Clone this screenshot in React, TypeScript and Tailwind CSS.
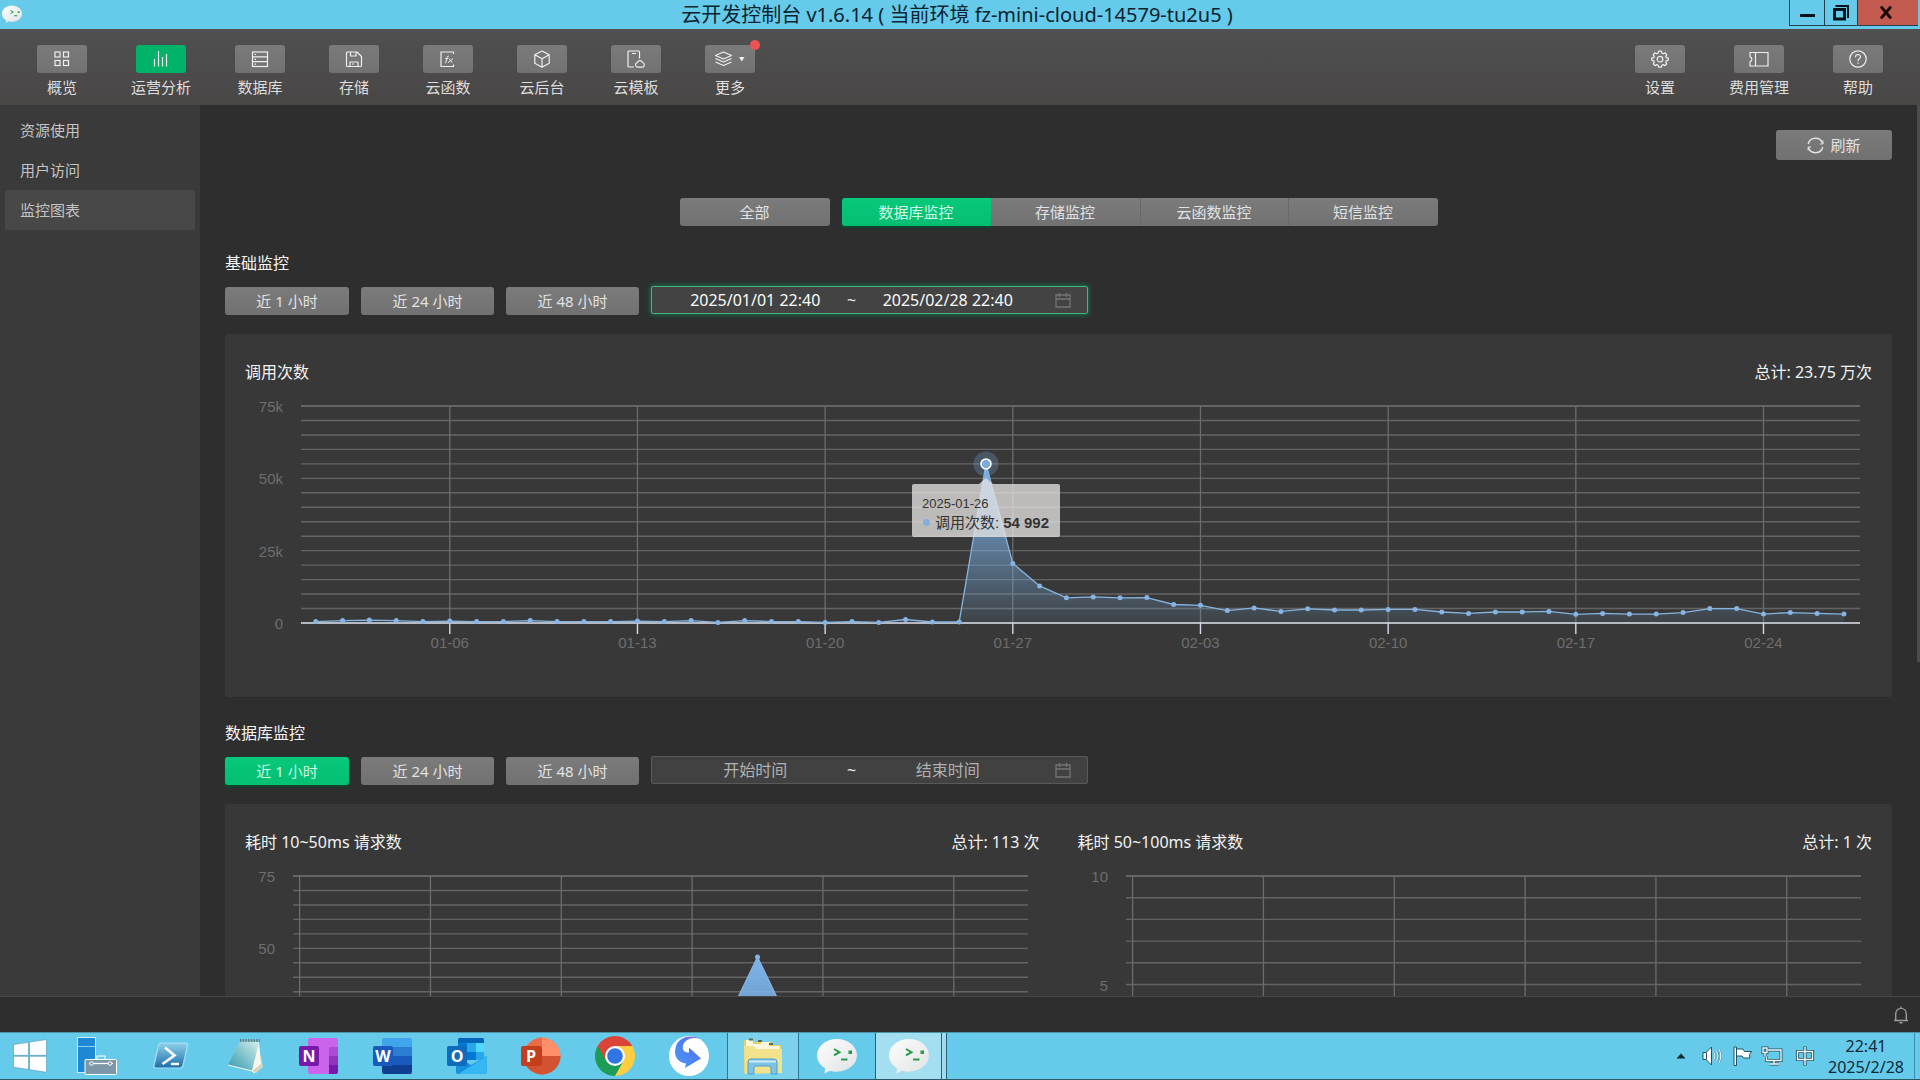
import React, { useLayoutEffect, useRef, useState } from 'react';

type IconProps = { className?: string };

const stroke = { fill: 'none', stroke: 'currentColor', strokeWidth: 1.2 } as const;

/* ---------- toolbar icons ---------- */

const OverviewIcon = () => (
  <svg width="18" height="18" viewBox="0 0 18 18" {...stroke} aria-hidden="true">
    <rect x="2" y="2" width="5" height="5" />
    <rect x="10.5" y="2" width="5" height="5" />
    <rect x="2" y="10.5" width="5" height="5" />
    <rect x="10.5" y="10.5" width="5" height="5" />
  </svg>
);

const AnalyticsIcon = () => (
  <svg width="18" height="18" viewBox="0 0 18 18" {...stroke} aria-hidden="true">
    <path d="M2.500 9v7.500M6.500 1v15.500M10.500 7v9.500M14.500 4v12.500" />
  </svg>
);

const DatabaseIcon = () => (
  <svg width="18" height="18" viewBox="0 0 18 18" {...stroke} aria-hidden="true">
    <rect x="1.500" y="2" width="15" height="14.500" />
    <path d="M1.500 6.800h15M1.500 11.700h15M3.500 4.500h1.500M3.500 9.300h1.500M3.500 14.200h1.500" />
  </svg>
);

const StorageIcon = () => (
  <svg width="18" height="18" viewBox="0 0 18 18" {...stroke} strokeLinejoin="round" aria-hidden="true">
    <path d="M2.500 2h9.500l4.500 4.500v9a1 1 0 0 1-1 1h-13a1 1 0 0 1-1-1v-12.500a1 1 0 0 1 1-1z" />
    <path d="M5.500 2v4h5.500v-4M5 16.500v-4.500h8v4.500M7 14h2" />
  </svg>
);

const FunctionIcon = () => (
  <svg width="18" height="18" viewBox="0 0 18 18" {...stroke} aria-hidden="true">
    <path d="M14.500 4v-2h-12.500v14.500h12.500v-2" />
    <path d="M10 6.200c-1.500-.5-2 .6-2.200 2l-.8 4c-.1.600-.4.900-1 .8M6.200 8.600h3M10 8.600l3.200 4M14 8.600l-4.800 4" strokeWidth="1" />
  </svg>
);

const CubeIcon = () => (
  <svg width="18" height="18" viewBox="0 0 18 18" {...stroke} strokeLinejoin="round" aria-hidden="true">
    <path d="M9 1l7.200 3.800v8.400l-7.200 4-7.200-4v-8.400zM1.800 4.800l7.200 3.900 7.200-3.900M9 8.700v8.500" />
  </svg>
);

const TemplateIcon = () => (
  <svg width="18" height="18" viewBox="0 0 18 18" {...stroke} strokeLinejoin="round" aria-hidden="true">
    <path d="M7 17h-5a1 1 0 0 1-1-1v-14a1 1 0 0 1 1-1h9.500a1 1 0 0 1 1 1v6.500M5 3.500h4" />
    <path d="M10.500 17.200a2.300 2.300 0 0 1-.3-4.500 2.800 2.800 0 0 1 5.300-.2 2.400 2.400 0 0 1-.2 4.700z" />
  </svg>
);

const MoreIcon = () => (
  <svg width="34" height="18" viewBox="0 0 34 18" {...stroke} strokeLinejoin="round" aria-hidden="true">
    <path d="M10.500 2l8 3.500-8 3.500-8-3.500z" />
    <path d="M2.500 8.500l8 3.500 8-3.500M2.500 12l8 3.500 8-3.500" />
    <path d="M26 7h5.500l-2.750 4.500z" fill="currentColor" stroke="none" />
  </svg>
);

const GearIcon = () => (
  <svg width="18" height="18" viewBox="0 0 18 18" {...stroke} strokeLinejoin="round" aria-hidden="true">
    <path d="M7.600 1.200h2.800l.5 2 1.300.6 1.900-1 1.600 1.800-1 1.800.5 1.200 2.100.6v2l-2.100.6-.5 1.300 1 1.800-1.600 1.700-1.900-1-1.300.6-.5 1.900h-2.800l-.5-1.900-1.300-.6-1.900 1-1.600-1.700 1-1.800-.5-1.300-2.100-.6v-2l2.100-.6.5-1.200-1-1.800 1.600-1.800 1.900 1 1.300-.6z" />
    <circle cx="9" cy="9.200" r="2.800" />
  </svg>
);

const TicketIcon = () => (
  <svg width="20" height="18" viewBox="0 0 20 18" {...stroke} aria-hidden="true">
    <path d="M1 2.500h18v13.500h-18v-4.200a2.600 2.600 0 0 0 0-5zM6.500 2.500v13.500" />
  </svg>
);

const HelpIcon = () => (
  <svg width="18" height="18" viewBox="0 0 18 18" {...stroke} aria-hidden="true">
    <circle cx="9" cy="9" r="8.200" />
    <path d="M6.500 7.200c0-3.600 5-3.400 5-.4 0 1.800-2.500 2-2.500 4.200" />
    <path d="M9 12.300v1.500" />
  </svg>
);

const RefreshIcon = () => (
  <svg width="17" height="17" viewBox="0 0 17 17" fill="none" stroke="currentColor" strokeWidth="1.400" aria-hidden="true">
    <path d="M1.200 7a7.500 7.500 0 0 1 14.500-.3M15.800 10a7.500 7.500 0 0 1-14.500.3" />
    <path d="M15.900 3.500v3.500h-3M1.100 13.500v-3.500h3" strokeWidth="1" />
  </svg>
);

const CalendarIcon = () => (
  <svg width="16" height="16" viewBox="0 0 16 16" fill="none" stroke="currentColor" strokeWidth="1.300" aria-hidden="true">
    <path d="M1 3h14v12h-14zM1 7h14M4.500 1v4M11.500 1v4" />
  </svg>
);

const BellIcon = () => (
  <svg width="16" height="18" viewBox="0 0 16 18" fill="none" stroke="currentColor" strokeWidth="1.400" aria-hidden="true">
    <path d="M1 14.500h14M2.700 14.500v-6.500c0-7.500 10.600-7.500 10.600 0v6.500M6.500 16.700h3M8 .5v1.800" />
  </svg>
);

/* ---------- taskbar icons ---------- */

const ChatBubble = ({ className }: IconProps) => (
  <svg className={className} viewBox="0 0 40 36" aria-hidden="true">
    <defs>
      <linearGradient id="bubble" x1="0" y1="0" x2="1" y2="1">
        <stop offset="0" stopColor="#fdfdfd" />
        <stop offset="1" stopColor="#dfe3e4" />
      </linearGradient>
    </defs>
    <path d="M20 1c11 0 20 7.200 20 16.300s-9 16.400-20 16.400c-2.600 0-5-.3-7.200-1l-5.300 3.100.6-5.500c-5-3-8.100-7.600-8.100-13 0-9.100 9-16.300 20-16.300z" fill="url(#bubble)" />
    <path d="M17 11l5.500 3.200-5.500 3.200" fill="none" stroke="#2a9a4a" strokeWidth="2" />
    <path d="M24 21.500h6.500" stroke="#2a9a4a" strokeWidth="2" />
    <rect x="31.500" y="12.500" width="3.500" height="3.500" fill="#2a9a4a" />
  </svg>
);

const StartIcon = () => (
  <svg width="34" height="34" viewBox="0 0 34 34" aria-hidden="true">
    <path d="M.5 5.500l15-2.200v13h-15zM16.500 3.100l17-2.600v15.800h-17zM.5 17.300h15v13.200l-15-2.200zM16.500 17.300h17v16l-17-2.600z" fill="#fff" stroke="#4e93b4" strokeWidth=".6" />
  </svg>
);

const ServerIcon = () => (
  <svg width="40" height="38" viewBox="0 0 40 38" aria-hidden="true">
    <rect x=".5" y=".5" width="18" height="35" fill="#1e88d6" stroke="#cfeefa" />
    <path d="M1 9.500h17" stroke="#8fd0f5" />
    <rect x="20" y="19" width="8" height="4" fill="none" stroke="#fff" />
    <rect x="8" y="22.500" width="31.500" height="15" rx="1" fill="#7c98a8" stroke="#fff" />
    <path d="M12 26.500h24" stroke="#fff" strokeWidth="1.300" />
    <circle cx="14.500" cy="26.500" r="1.800" fill="#7c98a8" stroke="#fff" />
    <circle cx="33" cy="26.500" r="1.800" fill="#7c98a8" stroke="#fff" />
  </svg>
);

const PowerShellIcon = () => (
  <svg width="36" height="28" viewBox="0 0 36 28" aria-hidden="true">
    <defs>
      <linearGradient id="psh" x1="0" y1="0" x2="0" y2="1">
        <stop offset="0" stopColor="#8fd0ec" />
        <stop offset="1" stopColor="#1d6ea8" />
      </linearGradient>
    </defs>
    <path d="M8.500 1h24q2.500 0 2 2.500l-4.500 20q-.6 2.500-3 2.500h-24q-2.500 0-2-2.500l4.500-20q.5-2.500 3-2.500z" fill="url(#psh)" stroke="#a8e0f5" strokeWidth="1.200" />
    <path d="M12 5.500l9.500 8-12 8.500" fill="none" stroke="#fff" strokeWidth="2.600" />
    <path d="M18 22h8" stroke="#fff" strokeWidth="2.400" />
  </svg>
);

const NotepadIcon = () => (
  <svg width="38" height="36" viewBox="0 0 38 36" aria-hidden="true">
    <defs>
      <linearGradient id="note" x1="1" y1="0" x2="0" y2="1">
        <stop offset="0" stopColor="#d6eeee" />
        <stop offset=".6" stopColor="#6fbac6" />
        <stop offset="1" stopColor="#3a95ab" />
      </linearGradient>
    </defs>
    <path d="M32 5l5 24-7 6-6-3z" fill="#d9d4bd" />
    <path d="M14 3l19 1-7 29-24-6z" fill="url(#note)" />
    <path d="M33 4l2 22-9 7z" fill="#f6f6ee" />
    <path d="M14 2.500h20" stroke="#6b7f80" strokeWidth="3" strokeDasharray="1.500 1.200" />
    <path d="M2 27l24 6 3 2" stroke="#eef6f4" strokeWidth="1.200" fill="none" />
  </svg>
);

const badge = { fontFamily: '"Open Sans","Noto Sans",sans-serif', fontWeight: 700, fontSize: 16, fill: '#fff', textAnchor: 'middle' } as const;

const OneNoteIcon = () => (
  <svg width="40" height="38" viewBox="0 0 40 38" aria-hidden="true">
    <rect x="9" y="1" width="30" height="36" rx="2" fill="#ca64ea" />
    <path d="M30 10h9v9h-9z" fill="#ae4bd5" />
    <path d="M30 19h9v9h-9z" fill="#9332bf" />
    <path d="M30 28h9v7a2 2 0 0 1-2 2h-7z" fill="#7719aa" />
    <rect x="0" y="9" width="20" height="20" rx="2" fill="#7719aa" />
    <text x="10" y="25" {...badge}>N</text>
  </svg>
);

const WordIcon = () => (
  <svg width="40" height="38" viewBox="0 0 40 38" aria-hidden="true">
    <path d="M9 10v-7a2 2 0 0 1 2-2h26a2 2 0 0 1 2 2v7z" fill="#41a5ee" />
    <path d="M9 10h30v9h-30z" fill="#2b7cd3" />
    <path d="M9 19h30v9h-30z" fill="#185abd" />
    <path d="M9 28h30v7a2 2 0 0 1-2 2h-26a2 2 0 0 1-2-2z" fill="#103f91" />
    <rect x="0" y="9" width="20" height="20" rx="2" fill="#185abd" />
    <text x="10" y="25" {...badge}>W</text>
  </svg>
);

const OutlookIcon = () => (
  <svg width="40" height="38" viewBox="0 0 40 38" aria-hidden="true">
    <rect x="11" y="1" width="26" height="22" rx="1.500" fill="#0364b8" />
    <path d="M11 6h9v9h-9z" fill="#0078d4" />
    <path d="M20 6h9v9h-9z" fill="#28a8ea" />
    <path d="M29 6h8v9h-8z" fill="#50d9ff" />
    <path d="M20 15h9v8h-9z" fill="#0078d4" />
    <path d="M29 15h8v8h-8z" fill="#28a8ea" />
    <path d="M9 19l15 9 15.500-9v16a2 2 0 0 1-2 2h-26.500a2 2 0 0 1-2-2z" fill="#1490df" />
    <path d="M39.500 19v16a2 2 0 0 1-2 2h-26z" fill="#35b8f1" />
    <rect x="0" y="9" width="20" height="20" rx="2" fill="#0f6cbd" />
    <text x="10" y="25" {...badge}>O</text>
  </svg>
);

const PowerPointIcon = () => (
  <svg width="40" height="38" viewBox="0 0 40 38" aria-hidden="true">
    <circle cx="21" cy="19" r="18.500" fill="#ed6c47" />
    <path d="M21 .5a18.500 18.500 0 0 1 18.500 18.500h-18.500z" fill="#ff8f6b" />
    <path d="M39.500 19a18.500 18.500 0 0 1-37 0z" fill="#d35230" />
    <rect x="0" y="9" width="21" height="20" rx="2" fill="#c43e1c" />
    <text x="10" y="25" {...badge}>P</text>
  </svg>
);

const ChromeIcon = () => (
  <svg width="40" height="40" viewBox="0 0 40 40" aria-hidden="true">
    <path d="M20 20l-17.300-10a20 20 0 0 0 17.300 30l8.700-15z" fill="#1e9b54" />
    <path d="M20 10h17.300a20 20 0 0 1-17.300 30l8.700-15z" fill="#ffcd40" />
    <path d="M2.700 10l8.700 15 8.600-15h17.300a20 20 0 0 0-34.600 0z" fill="#db4437" />
    <circle cx="20" cy="20" r="10" fill="#fff" />
    <circle cx="20" cy="20" r="7.800" fill="#2f76e4" />
  </svg>
);

const SwiftIcon = () => (
  <svg width="40" height="40" viewBox="0 0 40 40" aria-hidden="true">
    <defs>
      <linearGradient id="swirl" x1="1" y1="0" x2="0" y2="1">
        <stop offset="0" stopColor="#a06be8" />
        <stop offset=".4" stopColor="#4f7df0" />
        <stop offset="1" stopColor="#4a9af5" />
      </linearGradient>
    </defs>
    <circle cx="20" cy="20" r="20" fill="#fff" />
    <path d="M31 3c-9-5-21-2-24 7-3 9 1 16 10 17.500l-1 4.500 16-9.500-12-11v5c-5 0-7-3-6-7 2-6 9-9 17-6.500z" fill="url(#swirl)" />
  </svg>
);

const ExplorerIcon = () => (
  <svg width="40" height="38" viewBox="0 0 40 38" aria-hidden="true">
    <path d="M1 3h8l2 2h18l1 3h8v28h-37z" fill="#e6cf6a" />
    <path d="M3 3h7v4h8v-2h9v4h10v3h-34z" fill="#fbf6dc" />
    <path d="M6 2.500h4M15 4h4M26 7h4" stroke="#5a6b4a" strokeWidth="2" />
    <path d="M1 9h10l2 3h26v24l-37 1z" fill="#f3e28c" />
    <path d="M5 37v-12q0-3 3-3h23q3 0 3 3v12h-6v-6q0-2-2-2h-13q-2 0-2 2v6z" fill="#7cc4e6" stroke="#4f9fc9" />
    <path d="M6 24.500h27" stroke="#cdebf7" strokeWidth="2" />
  </svg>
);

/* ---------- chart ---------- */

type Tick = { at: number; label?: string };

type ChartProps = {
  label: string;
  max: number;
  majors: { value: number; label: string }[];
  rows: number;
  gutter: number;
  verticals: Tick[];
  points: { at: number; value: number }[];
  solid?: boolean;
  dots?: boolean;
  activeIndex?: number;
  children?: (x: number, y: number) => React.ReactNode;
};

const PLOT_TOP = 22;
const PLOT_HEIGHT = 217;
const PLOT_BOTTOM = PLOT_TOP + PLOT_HEIGHT;

function Chart({ label, max, majors, rows, gutter, verticals, points, solid, dots, activeIndex, children }: ChartProps) {
  const box = useRef<HTMLDivElement>(null);
  const [width, setWidth] = useState(1000);

  useLayoutEffect(() => {
    const node = box.current;
    if (!node) return;
    const measure = () => setWidth(node.clientWidth);
    measure();
    const observer = new ResizeObserver(measure);
    observer.observe(node);
    return () => observer.disconnect();
  }, []);

  const left = gutter;
  const right = width - 12;
  const px = (at: number) => left + at * (right - left);
  const py = (value: number) => PLOT_BOTTOM - (value / max) * PLOT_HEIGHT;
  const line = points.map((p, i) => `${i ? 'L' : 'M'}${px(p.at)} ${py(p.value)}`).join('');
  const area = points.length ? `${line}L${px(points[points.length - 1].at)} ${PLOT_BOTTOM}L${px(points[0].at)} ${PLOT_BOTTOM}Z` : '';
  const active = activeIndex === undefined ? undefined : points[activeIndex];
  const gradient = solid ? 'area-solid' : 'area-soft';

  return (
    <div ref={box} className="relative">
      <svg width={width} height={280} role="img" aria-label={label} className="block font-['Liberation_Sans',Arial,sans-serif] text-[15px]">
        <defs>
          <linearGradient id={gradient} x1="0" y1="0" x2="0" y2="1">
            <stop offset="0" stopColor="#7cb5ec" stopOpacity="1" />
            <stop offset="1" stopColor="#7cb5ec" stopOpacity={solid ? 0.5 : 0.08} />
          </linearGradient>
        </defs>
        {Array.from({ length: rows + 1 }, (_, i) => {
          const y = PLOT_TOP + (i * PLOT_HEIGHT) / rows;
          return <line key={i} x1={left} x2={right} y1={y} y2={y} stroke="#646464" strokeWidth={i === 0 ? 2 : 1.4} />;
        })}
        {verticals.map((v, i) => (
          <line key={i} x1={px(v.at)} x2={px(v.at)} y1={PLOT_TOP} y2={PLOT_BOTTOM} stroke="#6c6c6c" strokeWidth="1.300" />
        ))}
        <path d={area} fill={`url(#${gradient})`} />
        <line x1={left} x2={right} y1={PLOT_BOTTOM} y2={PLOT_BOTTOM} stroke="#d3dae6" strokeWidth="1.400" />
        {verticals.map((v, i) => (
          <line key={i} x1={px(v.at)} x2={px(v.at)} y1={PLOT_BOTTOM} y2={PLOT_BOTTOM + 11} stroke="#d3dae6" strokeWidth="1.400" />
        ))}
        <path d={line} fill="none" stroke="#86b4df" strokeWidth="1.300" />
        {dots && points.map((p, i) => <circle key={i} cx={px(p.at)} cy={py(p.value)} r="2.500" fill="#86b4e4" />)}
        {active && (
          <>
            <circle cx={px(active.at)} cy={py(active.value)} r="12.500" fill="#7cb5ec" fillOpacity=".25" />
            <circle cx={px(active.at)} cy={py(active.value)} r="5" fill="#7ea9dc" stroke="#fff" strokeWidth="1.500" />
          </>
        )}
        {majors.map((m) => (
          <text key={m.label} x={left - 18} y={py(m.value) + 6} textAnchor="end" fill="#6e6e6e">
            {m.label}
          </text>
        ))}
        {verticals.map((v) =>
          v.label ? (
            <text key={v.label} x={px(v.at)} y={PLOT_BOTTOM + 25} textAnchor="middle" fill="#6e6e6e">
              {v.label}
            </text>
          ) : null,
        )}
      </svg>
      {active && children?.(px(active.at), py(active.value))}
    </div>
  );
}

/* ---------- data ---------- */

const CALLS = [
  500, 850, 1000, 850, 500, 650, 500, 500, 850, 500, 500, 500, 650, 500, 850, 200, 850, 500, 500, 200, 500, 200, 1200, 350, 350,
  54992, 20600, 12800, 8700, 9000, 8700, 8800, 6400, 6100, 4300, 5200, 4000, 4900, 4500, 4500, 4700, 4700, 3800, 3300, 3800,
  3800, 4000, 3000, 3300, 3100, 3100, 3600, 5000, 5000, 3100, 3600, 3300, 3100,
];
const dayAt = (day: number) => (day + 0.55) / 58.15;
const CALL_POINTS = CALLS.map((value, i) => ({ at: dayAt(i), value }));
const CALL_TICKS = ['01-06', '01-13', '01-20', '01-27', '02-03', '02-10', '02-17', '02-24'].map((label, i) => ({
  label,
  at: dayAt(5 + i * 7),
}));

const minuteAt = (minute: number) => 0.009 + minute * 0.0178;
const HOUR_TICKS = Array.from({ length: 6 }, (_, i) => ({ at: minuteAt(i * 10) }));
const SLOW_POINTS = [0, 0, 0, 0, 0, 0, 0, 47, 0, 0, 0, 0].map((value, i) => ({ at: minuteAt(i * 5), value }));

const LEFT_TOOLS = [
  { label: '概览', icon: <OverviewIcon /> },
  { label: '运营分析', icon: <AnalyticsIcon />, active: true },
  { label: '数据库', icon: <DatabaseIcon /> },
  { label: '存储', icon: <StorageIcon /> },
  { label: '云函数', icon: <FunctionIcon /> },
  { label: '云后台', icon: <CubeIcon /> },
  { label: '云模板', icon: <TemplateIcon /> },
  { label: '更多', icon: <MoreIcon />, dot: true },
];
const RIGHT_TOOLS = [
  { label: '设置', icon: <GearIcon /> },
  { label: '费用管理', icon: <TicketIcon /> },
  { label: '帮助', icon: <HelpIcon /> },
];

const PINNED = [
  { label: '服务器管理器', icon: <ServerIcon /> },
  { label: 'PowerShell', icon: <PowerShellIcon /> },
  { label: '记事本', icon: <NotepadIcon /> },
  { label: 'OneNote', icon: <OneNoteIcon /> },
  { label: 'Word', icon: <WordIcon /> },
  { label: 'Outlook', icon: <OutlookIcon /> },
  { label: 'PowerPoint', icon: <PowerPointIcon /> },
  { label: 'Chrome', icon: <ChromeIcon /> },
  { label: '迅雷', icon: <SwiftIcon /> },
];

/* ---------- pieces ---------- */

function Tool({ label, icon, active, dot }: { label: string; icon: React.ReactNode; active?: boolean; dot?: boolean }) {
  return (
    <button type="button" className="flex min-w-[50px] flex-col items-center gap-1 text-[15px] leading-5 text-[#dedede]">
      <span
        className={`relative flex h-7 w-[50px] items-center justify-center rounded-[3px] text-[#efefef] ${
          active ? 'bg-[#00b368]' : 'bg-linear-to-b from-[#7a7a7a] to-[#727272]'
        }`}
      >
        {icon}
        {dot && <span className="absolute -top-[5px] -right-[5px] size-[10px] rounded-full bg-[#ee5253]" />}
      </span>
      {label}
    </button>
  );
}

const grey = 'bg-linear-to-b from-[#7b7b7b] to-[#717171] text-[#e2e2e2]';
const green = 'bg-linear-to-b from-[#07c97b] to-[#05be72] text-[#cdf7e4] shadow-[0_1px_2px_1px_#0b4a31]';

function Range({ start, end }: { start?: string; end?: string }) {
  const filled = Boolean(start);
  return (
    <div
      className={`-mt-px flex h-7 w-[437px] items-center rounded-[2px] border pr-4 pl-3 text-base ${
        filled ? 'border-[#4fae86] bg-[#434343] shadow-[0_0_4px_1px_#14734c]' : 'border-[#5a5a5a] bg-[#414141]'
      }`}
    >
      <input aria-label="开始时间" placeholder="开始时间" defaultValue={start} className="min-w-0 flex-1 bg-transparent text-center text-[#fafafa] outline-none placeholder:text-[#b0b0b0]" />
      <span className="w-2.5 text-center text-[#e8e8e8]">~</span>
      <input aria-label="结束时间" placeholder="结束时间" defaultValue={end} className="min-w-0 flex-1 bg-transparent text-center text-[#fafafa] outline-none placeholder:text-[#b0b0b0]" />
      <button type="button" aria-label="选择日期" className="ml-4 text-[#747474]">
        <CalendarIcon />
      </button>
    </div>
  );
}

function Section({ title, current, start, end, children }: { title: string; current?: number; start?: string; end?: string; children: React.ReactNode }) {
  const spans = ['近 1 小时', '近 24 小时', '近 48 小时'];
  return (
    <section>
      <h2 className="text-base leading-6 text-[#f5f5f5]">{title}</h2>
      <div className="mt-3 flex h-7 gap-3">
        {spans.map((text, i) => (
          <button
            key={text}
            type="button"
            className={`h-7 rounded-[3px] text-[15px] leading-7 ${i === 0 ? 'w-[124px]' : 'w-[133px]'} ${current === i ? green : grey}`}
          >
            {text}
          </button>
        ))}
        <Range start={start} end={end} />
      </div>
      <div className="mt-[19px] rounded-[3px] bg-[#383838] px-5 pt-[26px] pb-[33px]">{children}</div>
    </section>
  );
}

function ChartHead({ title, total }: { title: string; total: string }) {
  return (
    <div className="flex justify-between text-base leading-6 text-[#f2f2f2]">
      <h3>{title}</h3>
      <span>{total}</span>
    </div>
  );
}

function Tooltip({ x, y }: { x: number; y: number }) {
  return (
    <div
      className="absolute w-[148px] -translate-x-1/2 rounded-[2px] bg-[#e9e7e5]/75 px-2.5 pt-3 pb-1 font-['Liberation_Sans','Noto_Sans_CJK_SC',sans-serif] whitespace-nowrap text-[#333]"
      style={{ left: x, top: y + 20 }}
    >
      <span className="absolute -top-1.5 left-1/2 h-1.5 w-3.5 -translate-x-1/2 bg-[#e9e7e5]/75 [clip-path:polygon(50%_0,100%_100%,0_100%)]" />
      <p className="text-[13px] leading-4">2025-01-26</p>
      <p className="flex items-center text-[15px] leading-[21px]">
        <span className="mr-[5px] ml-px size-[7px] rounded-full bg-[#86aedb]" />
        调用次数:<b className="ml-1">54 992</b>
      </p>
    </div>
  );
}

/* ---------- page ---------- */

export default function App() {
  return (
    <div className="flex h-screen flex-col overflow-hidden bg-[#2e2e2e] font-['Noto_Sans','Noto_Sans_CJK_SC',sans-serif]">
      <header className="relative flex h-[29px] shrink-0 items-center justify-center bg-[#66cbea]">
        <ChatBubble className="absolute top-[5px] left-0.5 h-[18px] w-5" />
        <h1 className="pr-1.5 text-xl leading-7 text-[#0c2330]">云开发控制台 v1.6.14 ( 当前环境 fz-mini-cloud-14579-tu2u5 )</h1>
        <div className="absolute top-0 right-0.5 flex h-[26px] border-b border-l border-[#20404c]">
          <button type="button" aria-label="最小化" className="flex w-[35px] items-center justify-center border-r border-[#20404c]">
            <span className="mt-1.5 h-[3px] w-[15px] bg-[#04121a]" />
          </button>
          <button type="button" aria-label="还原" className="flex w-[33px] items-center justify-center border-r border-[#20404c] text-[#04121a]">
            <svg width="16" height="16" viewBox="0 0 16 16" fill="none" stroke="currentColor" aria-hidden="true">
              <path d="M2.500 1h12.500v12" strokeWidth="2" />
              <rect x="1.500" y="4.500" width="10" height="9.500" strokeWidth="3" />
            </svg>
          </button>
          <button type="button" aria-label="关闭" className="flex w-[60px] items-center justify-center bg-[#c35b50] pr-1 text-[#1a0806]">
            <svg width="14" height="13" viewBox="0 0 14 13" fill="none" stroke="currentColor" strokeWidth="2.800" aria-hidden="true">
              <path d="M2 .5l10 12M12 .5l-10 12" />
            </svg>
          </button>
        </div>
      </header>

      <nav className="flex h-[76px] shrink-0 justify-between bg-linear-to-b from-[#505050] to-[#494646] pt-4 pr-[37px] pl-[37px]">
        <div className="flex items-start gap-11">
          {LEFT_TOOLS.map((tool) => (
            <Tool key={tool.label} {...tool} />
          ))}
        </div>
        <div className="flex items-start gap-11">
          {RIGHT_TOOLS.map((tool) => (
            <Tool key={tool.label} {...tool} />
          ))}
        </div>
      </nav>

      <div className="flex min-h-0 flex-1">
        <aside className="flex w-[200px] shrink-0 flex-col bg-[#3a3a3a] px-[5px] pt-[5px] text-[15px] text-[#c4c4c4]">
          <a href="#usage" className="flex h-10 items-center px-[15px]">资源使用</a>
          <a href="#visits" className="flex h-10 items-center px-[15px]">用户访问</a>
          <a href="#charts" aria-current="page" className="flex h-10 items-center rounded-[3px] bg-[#484848] px-[15px]">监控图表</a>
        </aside>

        <main className="min-w-0 flex-1 overflow-hidden px-[25px] pt-[25px]">
          <div className="flex justify-end">
            <button type="button" className={`flex h-[30px] w-[116px] items-center justify-center gap-1.5 rounded-[3px] text-[15px] ${grey}`}>
              <RefreshIcon />
              刷新
            </button>
          </div>

          <div className="mt-[38px] mb-[25px] flex justify-center gap-3">
            <button type="button" className={`h-7 w-[150px] rounded-[3px] text-[15px] leading-7 ${grey}`}>全部</button>
            <div className="flex rounded-[3px]">
              <button type="button" className={`h-7 w-[149px] rounded-l-[3px] text-[15px] leading-7 ${green}`}>数据库监控</button>
              <button type="button" className={`h-7 w-[149px] text-[15px] leading-7 ${grey}`}>存储监控</button>
              <button type="button" className={`h-7 w-[149px] border-x border-[#686868] text-[15px] leading-7 ${grey}`}>云函数监控</button>
              <button type="button" className={`h-7 w-[149px] rounded-r-[3px] text-[15px] leading-7 ${grey}`}>短信监控</button>
            </div>
          </div>

          <Section title="基础监控" start="2025/01/01 22:40" end="2025/02/28 22:40">
            <ChartHead title="调用次数" total="总计: 23.75 万次" />
            <Chart
              label="调用次数"
              max={75000}
              rows={15}
              gutter={56}
              majors={[
                { value: 75000, label: '75k' },
                { value: 50000, label: '50k' },
                { value: 25000, label: '25k' },
                { value: 0, label: '0' },
              ]}
              verticals={CALL_TICKS}
              points={CALL_POINTS}
              dots
              activeIndex={25}
            >
              {(x, y) => <Tooltip x={x} y={y} />}
            </Chart>
          </Section>

          <div className="mt-6">
            <Section title="数据库监控" current={0}>
              <div className="grid grid-cols-2 gap-[38px]">
                <div className="min-w-0">
                  <ChartHead title="耗时 10~50ms 请求数" total="总计: 113 次" />
                  <Chart
                    label="耗时 10~50ms 请求数"
                    max={75}
                    rows={15}
                    gutter={48}
                    majors={[
                      { value: 75, label: '75' },
                      { value: 50, label: '50' },
                    ]}
                    verticals={HOUR_TICKS}
                    points={SLOW_POINTS}
                    solid
                    dots
                  />
                </div>
                <div className="min-w-0">
                  <ChartHead title="耗时 50~100ms 请求数" total="总计: 1 次" />
                  <Chart
                    label="耗时 50~100ms 请求数"
                    max={10}
                    rows={10}
                    gutter={48}
                    majors={[
                      { value: 10, label: '10' },
                      { value: 5, label: '5' },
                    ]}
                    verticals={HOUR_TICKS}
                    points={[]}
                  />
                </div>
              </div>
            </Section>
          </div>
        </main>
        <div className="w-[3px] shrink-0">
          <div className="h-5/8 bg-[#4c4c4c]" />
        </div>
      </div>

      <footer className="flex h-9 shrink-0 items-center justify-end border-t border-[#474747] bg-[#2e2e2e] pr-[11px] text-[#9a9a9a]">
        <button type="button" aria-label="通知">
          <BellIcon />
        </button>
      </footer>

      <div className="flex h-12 shrink-0 items-stretch border-y border-t-[#4d94ab] border-b-[#2c5968] bg-[#66cbea] text-[#0c2a38]">
        <button type="button" aria-label="开始" className="flex w-[60px] items-center justify-center">
          <StartIcon />
        </button>
        {PINNED.map((app) => (
          <button key={app.label} type="button" aria-label={app.label} className="flex w-[74px] items-center justify-center">
            {app.icon}
          </button>
        ))}
        <button type="button" aria-label="文件资源管理器" className="ml-[1px] flex w-[72px] items-center justify-center border-x border-[#2d7891] bg-[#7cd2ed]">
          <ExplorerIcon />
        </button>
        <button type="button" aria-label="微信开发者工具" className="flex w-[76px] items-center justify-center">
          <ChatBubble className="h-9 w-10" />
        </button>
        <button type="button" aria-label="云开发控制台" className="flex w-[67px] items-center justify-center border-x border-[#2d5f75] bg-[#a3dff1]">
          <ChatBubble className="h-9 w-10" />
        </button>
        <div className="w-[5px] border-r border-[#2d5f75] bg-[#9bdcf0]" />

        <div className="ml-auto flex items-center">
          <button type="button" aria-label="显示隐藏的图标" className="mr-4">
            <svg width="10" height="6" viewBox="0 0 10 6" aria-hidden="true">
              <path d="M5 .5l4.500 5h-9z" fill="#0c2a38" />
            </svg>
          </button>
          <svg className="mr-[11px]" width="20" height="20" viewBox="0 0 20 20" fill="#fff" stroke="#1f5264" strokeWidth="1" aria-hidden="true">
            <path d="M1 6.500h3l5.500-5.500v18l-5.500-5.500h-3zM4.500 6.500v7" />
            <path d="M12 6.500q2 3.500 0 7M14.500 4.500q3 5.500 0 11M17 3q3.500 7 0 14" fill="none" stroke="#4b8fa6" strokeWidth="2" />
            <path d="M12 6.500q2 3.500 0 7M14.500 4.500q3 5.500 0 11M17 3q3.500 7 0 14" fill="none" stroke="#f3fbfe" />
          </svg>
          <svg className="mr-2" width="20" height="20" viewBox="0 0 20 20" fill="#fff" stroke="#1f5264" strokeWidth="1" aria-hidden="true">
            <path d="M3.500 3h6.500l1.500 2.500h7l-2 3 .5 3.500h-6.500l-1.500-2h-5.500z" />
            <path d="M1 1h2.500v18.500h-2.500z" />
          </svg>
          <svg className="mr-3" width="22" height="20" viewBox="0 0 22 20" fill="none" stroke="#1f5264" strokeWidth="3" aria-hidden="true">
            <path d="M7 4h13v10.500h-14.500v-4M13 14.500v3.500M8 18h10M2 2h4v4.500h-4zM4 6.500v4" />
            <path d="M7 4h13v10.500h-14.500v-4M13 14.500v3.500M8 18h10M2 2h4v4.500h-4zM4 6.500v4" stroke="#f3fbfe" strokeWidth="1.400" />
          </svg>
          <svg className="mr-[11px]" width="20" height="20" viewBox="0 0 20 20" fill="none" stroke="#1f5264" strokeWidth="3.200" aria-hidden="true">
            <path d="M2.500 5.500h15v8h-15zM10 .5v19" />
            <path d="M2.500 5.500h15v8h-15zM10 1v18" stroke="#f3fbfe" strokeWidth="1.400" />
          </svg>
          <div className="mr-2 w-20 pt-0.5 text-center text-base leading-[21px]">
            <p>22:41</p>
            <p>2025/2/28</p>
          </div>
          <div className="h-full w-1.5 border-l border-[#3f8ea9]" />
        </div>
      </div>
    </div>
  );
}
